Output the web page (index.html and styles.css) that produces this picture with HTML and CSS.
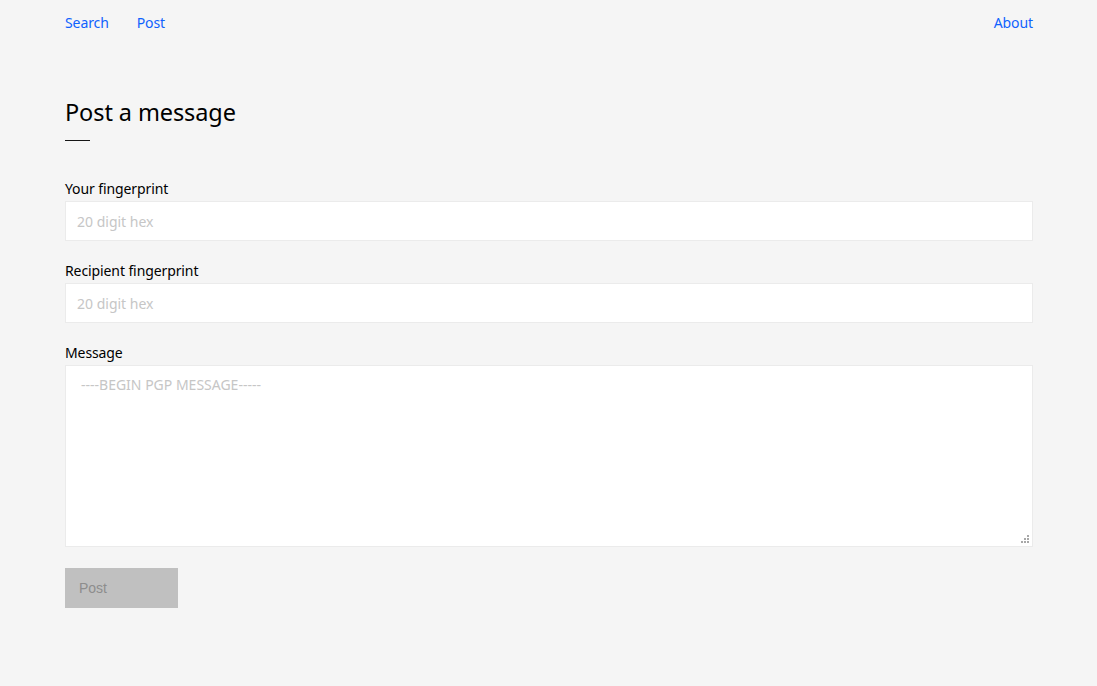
FILE: index.html
```html
<!DOCTYPE html>
<html>
<head>
<meta charset="utf-8">
<link rel="stylesheet" href="styles.css">
</head>
<body>
<div class="page">
  <nav class="nav">
    <div class="nav-left">
      <a href="#" class="nav-link">Search</a>
      <a href="#" class="nav-link">Post</a>
    </div>
    <a href="#" class="nav-link">About</a>
  </nav>
  <h1 class="title">Post a message</h1>
  <div class="rule"></div>
  <form class="form">
    <label class="field">
      <span class="label">Your fingerprint</span>
      <input class="input" type="text" placeholder="20 digit hex">
    </label>
    <label class="field">
      <span class="label">Recipient fingerprint</span>
      <input class="input" type="text" placeholder="20 digit hex">
    </label>
    <label class="field">
      <span class="label">Message</span>
      <span class="ta-wrap">
        <textarea class="textarea" placeholder="----BEGIN PGP MESSAGE-----"></textarea>
        <svg class="grip" width="8" height="8" viewBox="0 0 8 8">
          <rect x="6" y="0" width="2" height="2" fill="#a8a8a8"/>
          <rect x="3" y="3" width="2" height="2" fill="#a8a8a8"/>
          <rect x="6" y="3" width="2" height="2" fill="#a8a8a8"/>
          <rect x="0" y="6" width="2" height="2" fill="#a8a8a8"/>
          <rect x="3" y="6" width="2" height="2" fill="#a8a8a8"/>
          <rect x="6" y="6" width="2" height="2" fill="#a8a8a8"/>
        </svg>
      </span>
    </label>
    <button class="btn" type="button" disabled>Post</button>
  </form>
</div>
</body>
</html>
```
FILE: styles.css
```css
html, body {
  margin: 0;
  padding: 0;
  background: #f5f5f5;
}
body {
  font-family: "Noto Sans", "Liberation Sans", sans-serif;
  color: #161616;
}
.page {
  margin: 0 64px 0 65px;
}
.nav {
  display: flex;
  justify-content: space-between;
  height: 44px;
  align-items: center;
}
.nav-left {
  display: flex;
  gap: 28px;
}
.nav-link {
  color: #0f62fe;
  text-decoration: none;
  font-size: 14px;
  letter-spacing: -0.1px;
}
.title {
  margin: 53px 0 0 0;
  font-size: 23.5px;
  font-weight: 400;
  line-height: 30px;
  color: #000;
  letter-spacing: -0.1px;
}
.rule {
  width: 25px;
  height: 1px;
  background: #161616;
  margin-top: 13px;
}
.form {
  margin-top: 39px;
  display: flex;
  flex-direction: column;
}
.field {
  display: flex;
  flex-direction: column;
  margin-bottom: 21px;
}
.label {
  font-size: 14px;
  line-height: 18px;
  margin-bottom: 3px;
  color: #000;
  letter-spacing: -0.1px;
}
.input, .textarea {
  box-sizing: border-box;
  width: 100%;
  background: #fff;
  border: 1px solid #ebebeb;
  outline: none;
  font-family: "Noto Sans", "Liberation Sans", sans-serif;
  font-size: 14px;
  color: #161616;
  margin: 0;
}
.input {
  height: 40px;
  padding: 0 11px;
}
.ta-wrap {
  position: relative;
  display: block;
}
.textarea {
  height: 182px;
  padding: 9px 15px;
  resize: none;
  display: block;
}
.grip {
  position: absolute;
  right: 4px;
  bottom: 4px;
}
.input::placeholder, .textarea::placeholder {
  color: #c6c6c6;
}
.btn {
  width: 113px;
  height: 40px;
  background: #c0c0c0;
  color: #8d8d8d;
  border: none;
  text-align: left;
  padding: 0 14px;
  font-family: "Liberation Sans", Arial, sans-serif;
  font-size: 14px;
}
```
